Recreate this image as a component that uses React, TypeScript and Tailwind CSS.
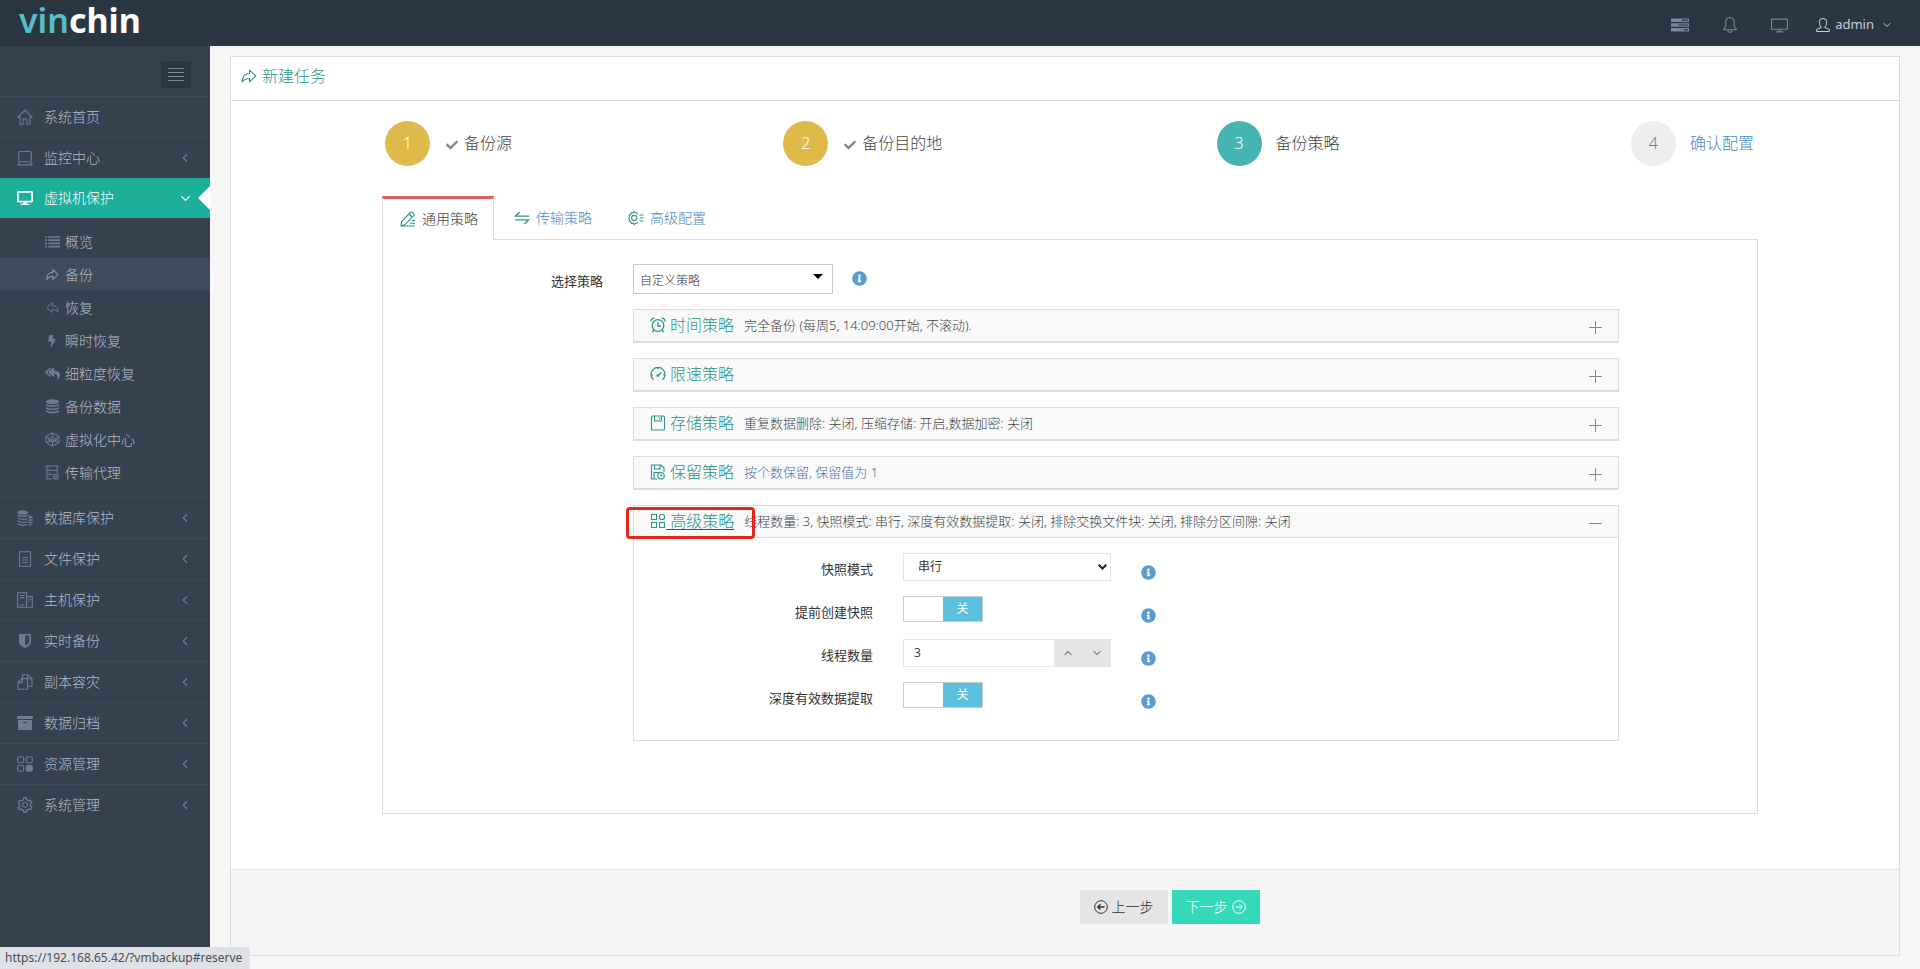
import { useState, type ReactNode } from "react";
import { AiOutlineSetting } from "react-icons/ai";
import { FaArchive, FaBolt, FaCheck, FaDesktop, FaInfoCircle, FaReplyAll } from "react-icons/fa";
import { FiChevronDown, FiChevronLeft, FiChevronUp } from "react-icons/fi";
import { IoArrowRedoOutline, IoArrowUndoOutline } from "react-icons/io5";
import { SlBell, SlScreenDesktop, SlUser } from "react-icons/sl";

type IconProps = { className?: string };

function Svg({ className, children }: IconProps & { children: ReactNode }) {
  return (
    <svg
      viewBox="0 0 16 16"
      fill="none"
      stroke="currentColor"
      strokeWidth="1.1"
      className={className}
      aria-hidden="true"
    >
      {children}
    </svg>
  );
}

const HomeIcon = ({ className }: IconProps) => (
  <Svg className={className}>
    <path d="M.8 8.400L8 1l7.200 7.400H13v6.900H9.900V10H6.100v5.300H3V8.400z" strokeLinejoin="round" />
  </Svg>
);

const LaptopIcon = ({ className }: IconProps) => (
  <Svg className={className}>
    <rect x="1.700" y="1.500" width="12.600" height="10.300" rx="1.500" />
    <path d="M2.500 12L.8 14.900h14.400L13.500 12" strokeLinejoin="round" />
  </Svg>
);

const ListIcon = ({ className }: IconProps) => (
  <svg viewBox="0 0 14 12" className={className} fill="currentColor" aria-hidden="true">
    <path d="M0 1h2v1.500H0zM3 1h11v1.500H3zM0 4h2v1.500H0zM3 4h11v1.500H3zM0 7h2v1.500H0zM3 7h11v1.500H3zM0 10h2v1.500H0zM3 10h11v1.500H3z" />
  </svg>
);

const CubeIcon = ({ className }: IconProps) => (
  <Svg className={className}>
    <path d="M8 .9l7 4v6.200l-7 4-7-4V4.900zM8 .9v4.300M8 10.800v4.300M1 4.900l11 5.500M15 4.900L4 10.400M8 5.200l4.500 2.800L8 10.800 3.500 8zM1 11.100l3-1.500M15 11.100l-3-1.500" />
  </Svg>
);

const TasksIcon = ({ className }: IconProps) => (
  <svg viewBox="0 0 18 14" className={className} fill="currentColor" aria-hidden="true">
    <path fillRule="evenodd" d="M0 .5h18v3.600H0zM11 1.600v1.200h6V1.600zM0 5.200h18v3.600H0zM7 6.400v1.200h10V6.400zM0 10h18v3.600H0zM13 11.200v1.200h4v-1.200z" />
  </svg>
);

const DatabaseIcon = ({ className }: IconProps) => (
  <svg viewBox="0 0 16 16" className={className} fill="currentColor" aria-hidden="true">
    <ellipse cx="8" cy="2.9" rx="7" ry="2.6" />
    <path d="M1 5c3 2.200 11 2.200 14 0v1.600c-2 2.400-12 2.400-14 0zM1 8.400c3 2.200 11 2.200 14 0V10c-2 2.400-12 2.400-14 0zM1 11.800c3 2.200 11 2.200 14 0v1.600c-2 2.800-12 2.800-14 0z" />
  </svg>
);

const DatabasesIcon = ({ className }: IconProps) => (
  <svg viewBox="0 0 16 16" className={className} fill="currentColor" aria-hidden="true">
    <ellipse cx="5.8" cy="2.5" rx="5.400" ry="2.200" />
    <path d="M.4 4.200c2.400 1.900 8.400 1.900 10.800 0v1.200c-2 2-8.800 2-10.800 0zM.4 7c2.200 1.900 7 2 9.600 1v1.500c-2.600.8-8 .6-9.600-1.200zM.4 10c2.200 1.900 7 2 9.600 1v1.500c-2.600.8-8 .6-9.600-1.200zM.4 13c2.200 1.700 7 1.800 9.600.9v1.300c-2.600.9-8 .8-9.600-.9z" />
    <path d="M11.900 5.400c2 0 3.800.6 3.800 1.500s-1.800 1.600-4 1.600zM11.200 9.600c1.600.1 3.400-.2 4.500-.9v1.200c-1 .8-2.900 1.200-4.500 1zM11.200 12c1.600.1 3.400-.2 4.500-.9v1.200c-1 .8-2.900 1.200-4.500 1zM11.200 14.400c1.600.1 3.400-.2 4.500-.9v1c-1 .8-2.900 1.200-4.500 1z" />
  </svg>
);

const FileIcon = ({ className }: IconProps) => (
  <Svg className={className}>
    <rect x="2.500" y=".7" width="11" height="14.600" />
    <path d="M5 6.500h6M5 9h6M5 11.500h6" />
  </Svg>
);

const HostIcon = ({ className }: IconProps) => (
  <Svg className={className}>
    <path d="M9.600 4V.7H.7v14.600h8.900zM9.600 4.600h5.700v10.700H9.600M3 3.500h4.500M3 5.600h4.500M3 13h4.500M11.300 7.300h2.600M11.300 9.300h1.600" />
  </Svg>
);

const ShieldIcon = ({ className }: IconProps) => (
  <svg viewBox="0 0 16 16" className={className} fill="currentColor" aria-hidden="true">
    <path fillRule="evenodd" d="M2 1h12v7.500c0 3-3 5.300-6 6.500-3-1.200-6-3.500-6-6.500zM8.200 2.600v10.200c2.200-1 4.200-2.600 4.200-4.500V2.600z" />
  </svg>
);

const CopyIcon = ({ className }: IconProps) => (
  <Svg className={className}>
    <path d="M5.500 4.600V.7h5.500l4 4v7.500h-4M10.500.7v4H15M5.200 4.600H10.500v10.700H1V8.600zM5.200 4.600v4H1" />
  </Svg>
);

const ResourceIcon = ({ className }: IconProps) => (
  <Svg className={className}>
    <rect x=".7" y=".7" width="6" height="6" rx="1.500" />
    <rect x="9.300" y=".7" width="6" height="6" rx="1.500" />
    <rect x=".7" y="9.300" width="6" height="6" rx="1.500" />
    <rect x="9.300" y="9.300" width="6" height="6" rx="1.500" fill="currentColor" />
  </Svg>
);

const AgentIcon = ({ className }: IconProps) => (
  <Svg className={className}>
    <path d="M7.500 15H2V1h11v8M2 5.500h11M2 10h6M4 3.300h1M4 7.800h1M4 12.500h1" />
    <circle cx="11.500" cy="12.500" r="2.500" />
    <circle cx="11.500" cy="12.500" r=".6" />
  </Svg>
);

const PenIcon = ({ className }: IconProps) => (
  <Svg className={className}>
    <path d="M1 15l.6-4.300L10.300 1.500q1-1 2.200 0l1 .9q1 1 0 2.200L5 13.600zM9 3l3.200 3M1 15h14M10 12.300h5M12 9.600h3" />
  </Svg>
);

const TransferIcon = ({ className }: IconProps) => (
  <Svg className={className}>
    <path d="M5.500 2L1.500 6.200h13.500M1 9.800h13.500L10.500 14" strokeWidth="1.300" />
  </Svg>
);

const ConfigIcon = ({ className }: IconProps) => (
  <Svg className={className}>
    <path d="M9.600 4.200l-.8-1.500-1.500.1L6.300 1.400 5 2.800l-1.700-.2-.6 1.700-1.500.9.3 1.500L.6 8l.9 1.300-.3 1.500 1.500.9.6 1.700 1.700-.2 1.300 1.400 1-1.400 1.500.1.8-1.500M11.500 5H15.500M11.500 8h4M11.500 11h4" />
    <circle cx="6.200" cy="8" r="2.600" />
  </Svg>
);

const AlarmIcon = ({ className }: IconProps) => (
  <Svg className={className}>
    <circle cx="8" cy="8.500" r="5.800" strokeWidth="1.300" />
    <path d="M8 5v4h3M1 4.500Q1 1 4.500 1.200M15 4.500Q15 1 11.500 1.200M4 13l-1.700 2M12 13l1.700 2" strokeWidth="1.300" />
  </Svg>
);

const GaugeIcon = ({ className }: IconProps) => (
  <Svg className={className}>
    <path d="M3.500 13.800A7 7 0 1 1 12.500 13.800M8 9.500l3.500-3M1.500 9h1.500M13 9h1.500M8 2v1.500" strokeWidth="1.200" />
    <circle cx="7.800" cy="9.600" r=".9" />
  </Svg>
);

const StorageIcon = ({ className }: IconProps) => (
  <Svg className={className}>
    <rect x="1.500" y="1" width="13" height="14" rx="1" />
    <path d="M4.500 1v5h7V1M9.300 2.500v2" />
  </Svg>
);

const RetainIcon = ({ className }: IconProps) => (
  <Svg className={className}>
    <path d="M7 15H1.500V1h9.500l3 3v4M4.500 1v4h5.500V1M4 15V8.500h5" />
    <circle cx="11" cy="11.700" r="3.200" />
    <path d="M11 9.800v2h1.500" />
  </Svg>
);

const AdvancedIcon = ({ className }: IconProps) => (
  <Svg className={className}>
    <rect x="1.500" y="1.500" width="5" height="5" />
    <rect x="9.500" y="1.500" width="5" height="5" rx="2" />
    <rect x="1.500" y="9.500" width="5" height="5" />
    <rect x="9.500" y="9.500" width="5" height="5" />
  </Svg>
);

const subItems = [
  { label: "概览", Icon: ListIcon },
  { label: "备份", Icon: IoArrowRedoOutline, active: true },
  { label: "恢复", Icon: IoArrowUndoOutline },
  { label: "瞬时恢复", Icon: FaBolt, small: true },
  { label: "细粒度恢复", Icon: FaReplyAll },
  { label: "备份数据", Icon: DatabaseIcon },
  { label: "虚拟化中心", Icon: CubeIcon },
  { label: "传输代理", Icon: AgentIcon },
];

const topItems = [
  { label: "系统首页", Icon: HomeIcon, leaf: true },
  { label: "监控中心", Icon: LaptopIcon },
];

const bottomItems = [
  { label: "数据库保护", Icon: DatabasesIcon },
  { label: "文件保护", Icon: FileIcon },
  { label: "主机保护", Icon: HostIcon },
  { label: "实时备份", Icon: ShieldIcon },
  { label: "副本容灾", Icon: CopyIcon },
  { label: "数据归档", Icon: FaArchive },
  { label: "资源管理", Icon: ResourceIcon },
  { label: "系统管理", Icon: AiOutlineSetting, large: true },
];

const steps = [
  { n: 1, label: "备份源", state: "done" },
  { n: 2, label: "备份目的地", state: "done" },
  { n: 3, label: "备份策略", state: "current" },
  { n: 4, label: "确认配置", state: "todo" },
];

const circleColors: Record<string, string> = {
  done: "bg-[#dfba49] text-white",
  current: "bg-[#45b6af] text-white",
  todo: "bg-[#eeeeee] text-[#4a8ac6]",
};

const labelColors: Record<string, string> = {
  done: "ml-4 text-[#444444]",
  current: "ml-[14px] text-[#444444]",
  todo: "ml-[14px] text-[#4a8ac6]",
};

const tabs = [
  { label: "通用策略", Icon: PenIcon },
  { label: "传输策略", Icon: TransferIcon },
  { label: "高级配置", Icon: ConfigIcon },
];

const policies = [
  { title: "时间策略", desc: "完全备份 (每周5, 14:09:00开始, 不滚动).", Icon: AlarmIcon },
  { title: "限速策略", desc: "", Icon: GaugeIcon },
  { title: "存储策略", desc: "重复数据删除: 关闭, 压缩存储: 开启,数据加密: 关闭", Icon: StorageIcon },
  { title: "保留策略", desc: "按个数保留, 保留值为 1", Icon: RetainIcon, blue: true },
];

type NavItemProps = {
  label: string;
  Icon: (p: IconProps) => ReactNode;
  leaf?: boolean;
  large?: boolean;
};

function NavItem({ label, Icon, leaf, large }: NavItemProps) {
  return (
    <a href="#" className="mr-0.5 flex h-[41px] items-center border-t border-[#3f4b5a] pl-[17px] pr-4 text-sm text-[#b4bcc8]">
      <span className="flex w-4 justify-center">
        <Icon className={`shrink-0 text-[#6c7c91] ${large ? "size-[18px]" : "size-4"}`} />
      </span>
      <span className="ml-[11px] flex-1">{label}</span>
      {!leaf && <FiChevronLeft className="size-[14px] text-[#6c7c91]" />}
    </a>
  );
}

function Sidebar() {
  return (
    <aside className="w-[210px] shrink-0 bg-[#364150]">
      <div className="flex h-[50px] items-center justify-end pr-[19px] pt-[7px]">
        <button aria-label="菜单" className="flex h-[27px] w-[30px] flex-col items-center justify-center gap-[3px] bg-[#2b3643]">
          <span className="h-px w-4 bg-[#7c8a9c]" />
          <span className="h-px w-4 bg-[#7c8a9c]" />
          <span className="h-px w-4 bg-[#7c8a9c]" />
          <span className="h-px w-4 bg-[#7c8a9c]" />
        </button>
      </div>
      <nav>
        {topItems.map((item) => (
          <NavItem key={item.label} {...item} />
        ))}
        <a href="#" className="relative flex h-10 items-center bg-[#1caf9a] pl-[17px] pr-[17px] text-sm text-white">
          <FaDesktop className="size-4" />
          <span className="ml-[11px] flex-1">虚拟机保护</span>
          <FiChevronDown className="size-[15px]" />
          <span className="absolute right-0 top-2 border-y-12 border-r-12 border-y-transparent border-r-white" />
        </a>
        <div className="pb-2 pt-[7px]">
          {subItems.map(({ label, Icon, active, small }) => (
            <a
              key={label}
              href="#"
              className={`flex h-[33px] items-center pl-[45px] text-sm text-[#b4bcc8] ${active ? "bg-[#3e4b5c]" : ""}`}
            >
              <span className="flex w-[14px] justify-center">
                <Icon className={`shrink-0 ${small ? "size-3" : "size-[15px]"} ${active ? "text-[#a7b2c1]" : "text-[#6c7c91]"}`} />
              </span>
              <span className="ml-1.5">{label}</span>
            </a>
          ))}
        </div>
        {bottomItems.map((item) => (
          <NavItem key={item.label} {...item} />
        ))}
      </nav>
    </aside>
  );
}

function Info() {
  return (
    <button aria-label="说明" className="block text-[#5b9bd1]">
      <FaInfoCircle className="size-[15px]" />
    </button>
  );
}

function Toggle({ id }: { id: string }) {
  return (
    <label htmlFor={id} className="flex h-[26px] w-20 cursor-pointer border border-[#cccccc] bg-white">
      <input id={id} type="checkbox" className="sr-only" />
      <span className="flex-1" />
      <span className="flex w-[39px] items-center justify-center bg-[#5bc0de] text-xs font-normal text-white">关</span>
    </label>
  );
}

function Field({ id, label, children }: { id: string; label: string; children: ReactNode }) {
  return (
    <div className="flex h-[43px]">
      <label htmlFor={id} className="w-[239px] pt-1.5 text-right text-[13px] font-normal leading-5 text-[#333333]">
        {label}
      </label>
      <div className="ml-[30px] w-[208px]">{children}</div>
      <div className="ml-[30px] pt-3">
        <Info />
      </div>
    </div>
  );
}

function PolicyPanels() {
  const [threads, setThreads] = useState(3);

  return (
    <div className="flex flex-col gap-[15px]">
      {policies.map(({ title, desc, Icon, blue }) => (
        <div key={title} className="flex h-[34px] items-center border border-b-2 border-[#dddddd] bg-[#f9f9f9] px-4">
          <a href="#" className="flex items-center gap-1 pb-0.5 text-base text-[#2f958a]">
            <Icon className="size-4" />
            {title}
          </a>
          <span className={`ml-2.5 flex-1 text-[13px] ${blue ? "text-[#4d70a8]" : "text-[#444444]"}`}>{desc}</span>
          <button aria-label={`展开${title}`} className="mt-1 size-[13px] text-[#888888]">
            <svg viewBox="0 0 13 13" stroke="currentColor" aria-hidden="true">
              <path d="M0 6.500h13M6.500 0v13" />
            </svg>
          </button>
        </div>
      ))}

      <div className="border border-[#dddddd]">
        <div className="relative flex h-8 items-center border-b border-[#dddddd] bg-[#f9f9f9] px-4">
          <a href="#" className="flex items-center pb-0.5 text-base text-[#2f958a]">
            <AdvancedIcon className="size-4" />
            <span className="whitespace-pre underline decoration-[#23635c] underline-offset-2"> 高级策略</span>
          </a>
          <span className="ml-2.5 flex-1 text-[13px] text-[#444444]">
            线程数量: 3, 快照模式: 串行, 深度有效数据提取: 关闭, 排除交换文件块: 关闭, 排除分区间隙: 关闭
          </span>
          <button aria-label="收起高级策略" className="mt-1 size-[13px] text-[#888888]">
            <svg viewBox="0 0 13 13" stroke="currentColor" aria-hidden="true">
              <path d="M0 6.500h13" />
            </svg>
          </button>
          <span className="pointer-events-none absolute -left-2 top-px h-8 w-[129px] rounded-sm border-3 border-[#e6261b]" />
        </div>
        <div className="pb-[15px] pt-[15px]">
          <Field id="snapshot" label="快照模式">
            <span className="relative block">
              <select id="snapshot" className="h-7 w-full appearance-none border border-[#e5e5e5] bg-white pl-3.5 text-xs font-normal text-[#333333]">
                <option>串行</option>
              </select>
              <svg viewBox="0 0 9 6" className="pointer-events-none absolute right-1 top-[11px] w-[9px]" fill="none" stroke="#222222" strokeWidth="2" aria-hidden="true">
                <path d="M.7.7l3.800 3.800L8.300.7" />
              </svg>
            </span>
          </Field>
          <Field id="presnap" label="提前创建快照">
            <Toggle id="presnap" />
          </Field>
          <Field id="threads" label="线程数量">
            <div className="flex h-7">
              <input
                id="threads"
                value={threads}
                onChange={(e) => setThreads(Number(e.target.value) || 0)}
                className="w-[151px] border border-r-0 border-[#e5e5e5] pl-2.5 text-xs font-normal text-[#444444]"
              />
              <button aria-label="增加" onClick={() => setThreads(threads + 1)} className="flex flex-1 items-center justify-center bg-[#e5e5e5] text-[#333333]">
                <FiChevronUp className="size-3" />
              </button>
              <button aria-label="减少" onClick={() => setThreads(threads - 1)} className="flex flex-1 items-center justify-center bg-[#e5e5e5] text-[#333333]">
                <FiChevronDown className="size-3" />
              </button>
            </div>
          </Field>
          <Field id="deep" label="深度有效数据提取">
            <Toggle id="deep" />
          </Field>
        </div>
      </div>
    </div>
  );
}

export default function App() {
  const [tab, setTab] = useState(0);

  return (
    <div className="flex min-h-screen flex-col bg-[#f6f6f6] font-['Noto_Sans','Noto_Sans_CJK_SC',sans-serif] font-light text-[#333333]">
      <header className="flex h-[46px] items-center justify-between bg-[#2b3643] pl-[19px] pr-[27px]">
        <a href="#" className="-mt-1.5 text-[34px] font-bold leading-none text-white">
          <span className="font-semibold text-[#5bbcc8]">vin</span>chin
        </a>
        <div className="flex items-center pt-1 text-[#79869a]">
          <button aria-label="任务">
            <TasksIcon className="h-[14px] w-[18px]" />
          </button>
          <button aria-label="通知" className="ml-[33px]">
            <SlBell className="size-4" />
          </button>
          <button aria-label="屏幕" className="ml-[33px]">
            <SlScreenDesktop className="size-[17px]" />
          </button>
          <button className="ml-7 flex items-center text-[13px] font-normal text-[#c6cfda]">
            <SlUser className="size-[14px]" />
            <span className="ml-[5px]">admin</span>
            <FiChevronDown className="ml-[7px] size-3" />
          </button>
        </div>
      </header>

      <div className="flex flex-1">
        <Sidebar />
        <main className="flex flex-1 flex-col pb-[13px] pl-5 pr-5 pt-2.5">
          <section className="flex flex-1 flex-col border border-[#dddddd] bg-white">
            <h1 className="flex h-11 items-center border-b border-[#dddddd] pb-1.5 pl-[9px] text-base font-light text-[#2f958a]">
              <IoArrowRedoOutline className="mr-1 size-[18px]" />
              新建任务
            </h1>

            <div className="flex-1 pl-[151px] pr-[141px] pt-5">
              <ol className="grid grid-cols-[398fr_433fr_414fr_123fr] pl-[3px] pr-1">
                {steps.map(({ n, label, state }) => (
                  <li key={n} className="flex items-center">
                    <span className={`flex size-[45px] shrink-0 items-center justify-center rounded-full pb-0.5 text-base ${circleColors[state]}`}>
                      {n}
                    </span>
                    <span className={`flex items-center whitespace-nowrap pb-0.5 text-base ${labelColors[state]}`}>
                      {state === "done" && <FaCheck className="mr-1.5 mt-1 size-3 text-[#888888]" />}
                      {label}
                    </span>
                  </li>
                ))}
              </ol>

              <div role="tablist" className="mt-[30px] flex h-11">
                {tabs.map(({ label, Icon }, i) => (
                  <button
                    key={label}
                    role="tab"
                    aria-selected={tab === i}
                    onClick={() => setTab(i)}
                    className={`flex items-center gap-1.5 text-sm ${
                      tab === i
                        ? "z-10 border-x border-t-3 border-x-[#dddddd] border-t-[#e05d5d] bg-white pb-0.5 pl-[17px] pr-[15px] text-[#444444]"
                        : "pl-5 pr-4 text-[#4a8ac6]"
                    }`}
                  >
                    <Icon className="size-4 text-[#2f958a]" />
                    {label}
                  </button>
                ))}
              </div>

              <div className="-mt-px border border-[#dddddd] pb-[72px] pt-6">
                <div className="flex">
                  <label htmlFor="policy" className="w-[220px] pt-[7px] text-right text-[13px] font-normal leading-5">
                    选择策略
                  </label>
                  <div className="relative ml-[30px] w-[200px]">
                    <select id="policy" className="h-[30px] w-full appearance-none border border-[#c8c8c8] bg-white pl-1.5 pt-1 text-xs">
                      <option>自定义策略</option>
                    </select>
                    <span className="pointer-events-none absolute right-2.5 top-2.5 border-x-5 border-t-5 border-x-transparent border-t-black" />
                  </div>
                  <div className="ml-[19px] pt-[7px]">
                    <Info />
                  </div>
                </div>
                <div className="ml-[250px] mr-[138px] mt-[15px]">
                  <PolicyPanels />
                </div>
              </div>
            </div>

            <footer className="flex h-[86px] justify-center gap-1 border-t border-[#e5e5e5] bg-[#f5f5f5] pl-[209px] pt-5">
              <button className="flex h-[34px] w-[88px] items-center justify-center gap-1 bg-[#e5e5e5] text-sm text-[#333333]">
                <svg viewBox="0 0 14 14" className="size-[14px]" fill="none" stroke="currentColor" aria-hidden="true">
                  <circle cx="7" cy="7" r="6.300" />
                  <path d="M10.500 7H3.800M6.500 4.200L3.700 7l2.800 2.800" strokeWidth="1.300" />
                </svg>
                上一步
              </button>
              <button className="flex h-[34px] w-[88px] items-center justify-center gap-1 bg-[#35d8b8] text-sm text-white">
                下一步
                <svg viewBox="0 0 14 14" className="size-[14px]" fill="none" stroke="currentColor" aria-hidden="true">
                  <circle cx="7" cy="7" r="6.300" />
                  <path d="M3.500 7h6.700M7.500 4.200L10.300 7l-2.800 2.800" />
                </svg>
              </button>
            </footer>
          </section>
        </main>
      </div>

      <div className="fixed bottom-0 left-0 z-20 flex h-[22px] items-center rounded-tr bg-[#dee1e6] pl-[5px] pr-2 text-xs font-normal text-[#4a4d51]">
        https://192.168.65.42/?vmbackup#reserve
      </div>
    </div>
  );
}
